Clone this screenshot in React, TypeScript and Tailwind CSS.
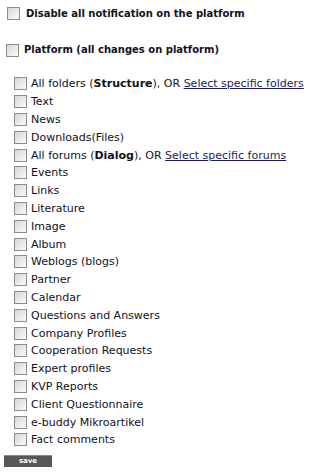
import React from 'react'

const items: React.ReactNode[] = [
  <>
    All folders (<b>Structure</b>), OR{' '}
    <a href="#" className="text-[#1c1c5e] underline">Select specific folders</a>
  </>,
  'Text',
  'News',
  'Downloads(Files)',
  <>
    All forums (<b>Dialog</b>), OR{' '}
    <a href="#" className="text-[#1c1c5e] underline">Select specific forums</a>
  </>,
  'Events',
  'Links',
  'Literature',
  'Image',
  'Album',
  'Weblogs (blogs)',
  'Partner',
  'Calendar',
  'Questions and Answers',
  'Company Profiles',
  'Cooperation Requests',
  'Expert profiles',
  'KVP Reports',
  'Client Questionnaire',
  'e-buddy Mikroartikel',
  'Fact comments',
]

function Box() {
  return (
    <span className="inline-block w-[13px] h-[13px] shrink-0 border border-[#8c8c8c] bg-gradient-to-br from-[#d6d6d6] to-[#fbfbfb]" />
  )
}

export default function App() {
  return (
    <div className="w-[322px] h-[472px] bg-white text-[11px] text-[#111122] font-['DejaVu_Sans',Verdana,sans-serif] relative">
      <div className="flex items-center gap-[6px] pl-[7px] pt-[7px] h-[20px]">
        <Box />
        <span className="font-bold text-[10px] leading-none">Disable all notification on the platform</span>
      </div>
      <div className="flex items-center gap-[5px] pl-[6px] mt-[20px] h-[20px]">
        <Box />
        <span className="font-bold text-[10px] leading-none">Platform (all changes on platform)</span>
      </div>
      <div className="mt-[15px] pl-[14px] flex flex-col">
        {items.map((it, i) => (
          <div key={i} className="flex items-center gap-[4px] h-[17.8px] leading-none whitespace-nowrap">
            <Box />
            <span>{it}</span>
          </div>
        ))}
      </div>
      <button className="absolute left-[4px] top-[455px] w-[48px] h-[12px] bg-[#585858] border-t border-[#8a8a8a] text-white text-[7px] font-bold leading-none flex items-center justify-center">
        save
      </button>
    </div>
  )
}
